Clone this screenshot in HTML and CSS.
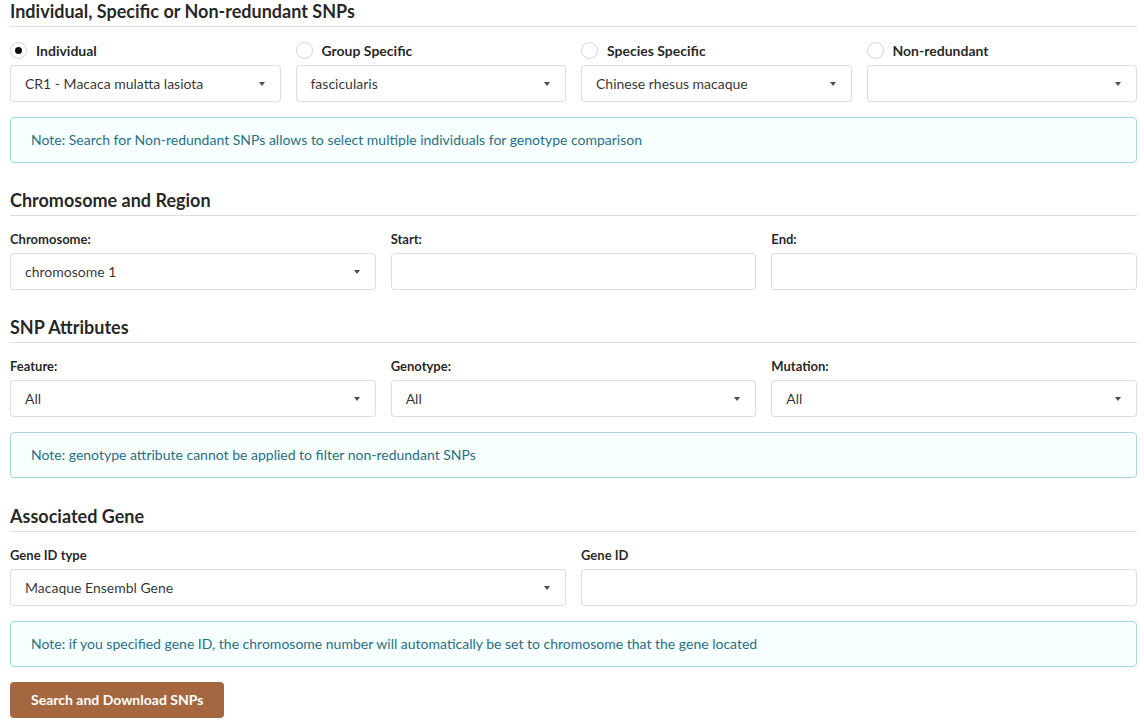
FILE: index.html
```html
<!DOCTYPE html>
<html>
<head>
<meta charset="utf-8">
<link rel="stylesheet" href="styles.css">
</head>
<body>
<form class="form">
  <h3 class="header">Individual, Specific or Non-redundant SNPs</h3>
  <div class="grid four">
    <div class="field">
      <label class="radio"><span class="circle checked"></span>Individual</label>
      <div class="dropdown"><span class="text">CR1 - Macaca mulatta lasiota</span><span class="arrow"></span></div>
    </div>
    <div class="field">
      <label class="radio"><span class="circle"></span>Group Specific</label>
      <div class="dropdown"><span class="text">fascicularis</span><span class="arrow"></span></div>
    </div>
    <div class="field">
      <label class="radio"><span class="circle"></span>Species Specific</label>
      <div class="dropdown"><span class="text">Chinese rhesus macaque</span><span class="arrow"></span></div>
    </div>
    <div class="field">
      <label class="radio"><span class="circle"></span>Non-redundant</label>
      <div class="dropdown"><span class="text"></span><span class="arrow"></span></div>
    </div>
  </div>
  <div class="message">Note: Search for Non-redundant SNPs allows to select multiple individuals for genotype comparison</div>

  <h3 class="header section">Chromosome and Region</h3>
  <div class="grid three">
    <div class="field">
      <label class="label">Chromosome:</label>
      <div class="dropdown"><span class="text">chromosome 1</span><span class="arrow"></span></div>
    </div>
    <div class="field">
      <label class="label">Start:</label>
      <input class="input" type="text">
    </div>
    <div class="field">
      <label class="label">End:</label>
      <input class="input" type="text">
    </div>
  </div>

  <h3 class="header section">SNP Attributes</h3>
  <div class="grid three">
    <div class="field">
      <label class="label">Feature:</label>
      <div class="dropdown"><span class="text">All</span><span class="arrow"></span></div>
    </div>
    <div class="field">
      <label class="label">Genotype:</label>
      <div class="dropdown"><span class="text">All</span><span class="arrow"></span></div>
    </div>
    <div class="field">
      <label class="label">Mutation:</label>
      <div class="dropdown"><span class="text">All</span><span class="arrow"></span></div>
    </div>
  </div>
  <div class="message">Note: genotype attribute cannot be applied to filter non-redundant SNPs</div>

  <h3 class="header section after-message">Associated Gene</h3>
  <div class="grid two">
    <div class="field">
      <label class="label">Gene ID type</label>
      <div class="dropdown"><span class="text">Macaque Ensembl Gene</span><span class="arrow"></span></div>
    </div>
    <div class="field">
      <label class="label">Gene ID</label>
      <input class="input" type="text">
    </div>
  </div>
  <div class="message">Note: if you specified gene ID, the chromosome number will automatically be set to chromosome that the gene located</div>

  <div class="actions"><button class="button" type="button">Search and Download SNPs</button></div>
</form>
</body>
</html>
```
FILE: styles.css
```css
html, body {
  margin: 0;
  padding: 0;
  background: #ffffff;
}
body {
  font-family: Lato, "Helvetica Neue", Arial, sans-serif;
  font-size: 14px;
  color: rgba(0, 0, 0, 0.87);
}
.form {
  padding: 0 7px 0 10px;
  display: flex;
  flex-direction: column;
}
.header {
  margin: 0 0 15px 0;
  font-size: 18px;
  font-weight: 700;
  line-height: 23px;
  padding-bottom: 3px;
  border-bottom: 1px solid rgba(34, 36, 38, 0.15);
  color: rgba(0, 0, 0, 0.87);
}
.header.section {
  margin-top: 26px;
}
.header.section.after-message {
  margin-top: 27px;
}
.grid {
  display: grid;
  column-gap: 15px;
}
.grid.four { grid-template-columns: repeat(4, 1fr); }
.grid.three { grid-template-columns: repeat(3, 1fr); }
.grid.two { grid-template-columns: repeat(2, 1fr); }
.field {
  display: flex;
  flex-direction: column;
  min-width: 0;
}
.radio {
  display: flex;
  align-items: center;
  height: 17px;
  margin-bottom: 6px;
  font-size: 14px;
  font-weight: 700;
  line-height: 17px;
  color: rgba(0, 0, 0, 0.87);
}
.circle {
  box-sizing: border-box;
  width: 17px;
  height: 17px;
  border: 1px solid #d4d4d5;
  border-radius: 50%;
  margin-right: 9px;
  display: flex;
  align-items: center;
  justify-content: center;
  flex: none;
}
.circle.checked::after {
  content: "";
  width: 7px;
  height: 7px;
  border-radius: 50%;
  background: rgba(0, 0, 0, 0.95);
}
.label {
  font-size: 13px;
  font-weight: 700;
  line-height: 17px;
  margin-bottom: 5px;
  color: rgba(0, 0, 0, 0.87);
}
.dropdown, .input {
  box-sizing: border-box;
  height: 37px;
  border: 1px solid rgba(34, 36, 38, 0.15);
  border-radius: 4px;
  background: #fff;
  font-family: inherit;
  font-size: 14px;
  color: rgba(0, 0, 0, 0.87);
}
.dropdown {
  display: flex;
  align-items: center;
  justify-content: space-between;
  padding: 0 14px;
}
.dropdown .text {
  white-space: nowrap;
  overflow: hidden;
  color: rgba(0, 0, 0, 0.82);
}
.arrow {
  width: 0;
  height: 0;
  border-left: 3.5px solid transparent;
  border-right: 3.5px solid transparent;
  border-top: 4px solid rgba(0, 0, 0, 0.7);
  margin-right: 1px;
  flex: none;
}
.input {
  width: 100%;
  padding: 0 14px;
  outline: none;
}
.message {
  margin-top: 15px;
  box-sizing: border-box;
  padding: 12px 20px;
  line-height: 20px;
  font-size: 14px;
  background: #f8ffff;
  color: #276f86;
  border: 1px solid #a9d5de;
  border-radius: 4px;
}
.actions {
  margin-top: 15px;
  display: flex;
}
.button {
  font-family: inherit;
  font-size: 14px;
  font-weight: 700;
  line-height: 14px;
  padding: 11px 21px;
  border: none;
  border-radius: 4px;
  background: #a5673f;
  color: #fff;
  cursor: pointer;
}
```
